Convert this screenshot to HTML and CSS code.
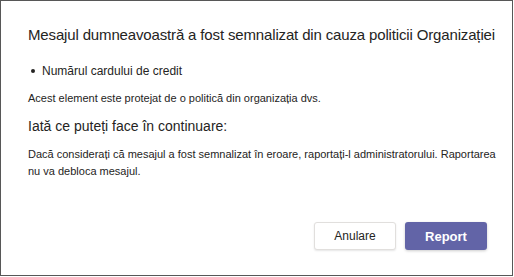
FILE: index.html
```html
<!DOCTYPE html>
<html lang="ro">
<head>
    <meta charset="UTF-8">
    <title>Mesaj semnalizat</title>
    <link rel="stylesheet" href="styles.css">
</head>
<body>
    <div class="dialog">
        <h1 class="title">Mesajul dumneavoastră a fost semnalizat din cauza politicii Organizației</h1>

        <ul class="matches">
            <li>Numărul cardului de credit</li>
        </ul>

        <p class="note">Acest element este protejat de o politică din organizația dvs.</p>

        <h2 class="subtitle">Iată ce puteți face în continuare:</h2>

        <p class="info">Dacă considerați că mesajul a fost semnalizat în eroare, raportați-l administratorului. Raportarea nu va debloca mesajul.</p>

        <div class="actions">
            <button class="btn btn-secondary" type="button">Anulare</button>
            <button class="btn btn-primary" type="button">Report</button>
        </div>
    </div>
</body>
</html>
```

FILE: styles.css
```css
* {
    margin: 0;
    padding: 0;
    box-sizing: border-box;
}

body {
    font-family: 'Liberation Sans', Arial, sans-serif;
    color: #252423;
    background: #fff;
}

.dialog {
    width: 513px;
    height: 276px;
    border: 1px solid #575757;
    padding: 0 8px 0 27px;
    display: flex;
    flex-direction: column;
}

.title {
    font-size: 15px;
    font-weight: 400;
    letter-spacing: -0.15px;
    margin-top: 25px;
    line-height: 18px;
    white-space: nowrap;
}

.matches {
    list-style: none;
    margin-top: 20px;
    font-size: 12px;
    line-height: 14px;
}

.matches li {
    position: relative;
    padding-left: 14px;
}

.matches li::before {
    content: "";
    position: absolute;
    left: 3px;
    top: 5px;
    width: 4px;
    height: 4px;
    border-radius: 50%;
    background: #252423;
}

.note {
    margin-top: 13px;
    font-size: 11px;
    line-height: 14px;
}

.subtitle {
    margin-top: 13px;
    font-size: 14px;
    font-weight: 400;
    line-height: 16px;
}

.info {
    margin-top: 12px;
    font-size: 11px;
    line-height: 17px;
}

.actions {
    margin-top: auto;
    margin-bottom: 25px;
    display: flex;
    justify-content: flex-end;
    gap: 9px;
    padding-right: 17px;
}

.btn {
    width: 82px;
    height: 28px;
    border-radius: 3px;
    font-family: inherit;
    font-size: 12px;
    cursor: pointer;
}

.btn-secondary {
    background: #fff;
    color: #252423;
    border: 1px solid #e1dfdd;
    box-shadow: 0 1px 2px rgba(0,0,0,0.1);
}

.btn-primary {
    background: #6264a7;
    color: #fff;
    border: none;
    font-size: 13px;
    font-weight: 700;
    box-shadow: 0 1px 3px rgba(0,0,0,0.2);
}
```
